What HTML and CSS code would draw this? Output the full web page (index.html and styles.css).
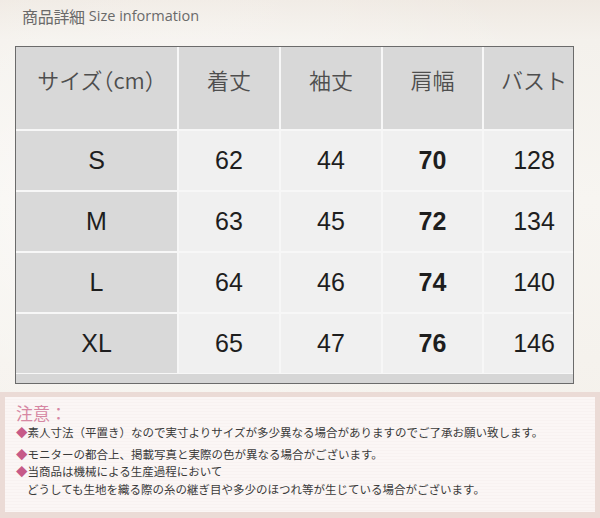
FILE: index.html
```html
<!DOCTYPE html>
<html lang="ja">
<head>
<meta charset="utf-8">
<title>商品詳細 Size information</title>
<link rel="stylesheet" href="styles.css">
</head>
<body>
<div class="page">
  <h1 class="title"><span class="title-jp">商品詳細</span> <span class="title-en">Size information</span></h1>

  <div class="table-wrap">
    <div class="size-grid">
      <div class="cell head">サイズ<span class="paren">（</span>cm<span class="paren">）</span></div>
      <div class="cell head">着丈</div>
      <div class="cell head">袖丈</div>
      <div class="cell head">肩幅</div>
      <div class="cell head">バスト</div>

      <div class="cell label">S</div>
      <div class="cell num">62</div>
      <div class="cell num">44</div>
      <div class="cell num bold">70</div>
      <div class="cell num">128</div>

      <div class="cell label">M</div>
      <div class="cell num">63</div>
      <div class="cell num">45</div>
      <div class="cell num bold">72</div>
      <div class="cell num">134</div>

      <div class="cell label">L</div>
      <div class="cell num">64</div>
      <div class="cell num">46</div>
      <div class="cell num bold">74</div>
      <div class="cell num">140</div>

      <div class="cell label">XL</div>
      <div class="cell num">65</div>
      <div class="cell num">47</div>
      <div class="cell num bold">76</div>
      <div class="cell num">146</div>
    </div>
    <div class="scroll-strip"></div>
  </div>

  <div class="notes">
    <div class="notes-title">注意：</div>
    <p class="note first"><span class="dia">◆</span>素人寸法（平置き）なので実寸よりサイズが多少異なる場合がありますのでご了承お願い致します。</p>
    <p class="note"><span class="dia">◆</span>モニターの都合上、掲載写真と実際の色が異なる場合がございます。</p>
    <p class="note"><span class="dia">◆</span>当商品は機械による生産過程において<br><span class="indent">どうしても生地を織る際の糸の継ぎ目や多少のほつれ等が生じている場合がございます。</span></p>
  </div>
</div>
</body>
</html>
```

FILE: styles.css
```css
html, body {
  margin: 0;
  padding: 0;
}

body {
  width: 600px;
  height: 518px;
  overflow: hidden;
  background: #f3efe9;
  font-family: "Noto Sans CJK JP", "Noto Sans", sans-serif;
}

.page {
  width: 600px;
  height: 518px;
  background:
    radial-gradient(ellipse at 30% 40%, rgba(255,255,255,0.55), rgba(255,255,255,0) 70%),
    linear-gradient(#efe9e2 0, #f4f1ec 40px, #f7f5f1 200px, #f3efe9 100%);
  display: flex;
  flex-direction: column;
}

.title {
  margin: 0;
  height: 32px;
  font-size: 15px;
  line-height: 32px;
  padding-left: 22px;
  font-weight: normal;
  color: #6a6a6a;
  white-space: nowrap;
  display: flex;
  align-items: center;
  gap: 4px;
}

.title-jp {
  font-family: "Noto Sans CJK JP", sans-serif;
  font-size: 16px;
  letter-spacing: -0.3px;
}

.title-en {
  font-family: "Open Sans", "Noto Sans", sans-serif;
  font-size: 14.5px;
}

.table-wrap {
  box-sizing: border-box;
  margin-top: 14px;
  margin-left: 15px;
  width: 559px;
  height: 338px;
  border: 1px solid #6b6b6b;
  background: #f7f7f7;
  overflow: hidden;
}

.size-grid {
  display: grid;
  grid-template-columns: 161px 100px 100px 99px 100px;
  grid-template-rows: 82px 59px 59px 59px 59px;
  gap: 2px;
  width: 570px;
}

.cell {
  display: flex;
  align-items: center;
  justify-content: center;
  white-space: nowrap;
}

.head {
  background: #d8d8d8;
  color: #4e4e4e;
  font-family: "Noto Sans CJK JP", sans-serif;
  font-size: 22px;
  font-weight: 350;
  padding-bottom: 18px;
  box-sizing: border-box;
}

.paren {
  font-feature-settings: "halt";
}

.label {
  background: #d9d9d9;
  color: #1e1e1e;
  font-family: "Liberation Sans", Arial, sans-serif;
  font-size: 25px;
}

.num {
  background: #f0f0f0;
  color: #1e1e1e;
  font-family: "Liberation Sans", Arial, sans-serif;
  font-size: 25px;
}

.bold {
  font-weight: bold;
}

.scroll-strip {
  margin-top: 1px;
  height: 9px;
  background: #d6d6d6;
}

.notes {
  box-sizing: border-box;
  margin-top: 8px;
  flex: 1;
  border: 5px solid #ebdbd6;
  border-bottom-width: 6px;
  background: repeating-linear-gradient(#fbf6f5 0, #fbf6f5 2px, #f8f2f1 2px, #f8f2f1 3px);
  padding: 5px 11px 0;
  color: #3a3a3a;
  font-family: "Noto Sans CJK JP", sans-serif;
}

.notes-title {
  color: #d687a3;
  font-size: 17px;
  line-height: 22px;
}

.note {
  margin: 0;
  font-size: 11.5px;
  line-height: 17.5px;
  white-space: nowrap;
}

.note.first {
  margin-bottom: 4px;
}

.dia {
  color: #c65a88;
}

.indent {
  padding-left: 11px;
}
```
